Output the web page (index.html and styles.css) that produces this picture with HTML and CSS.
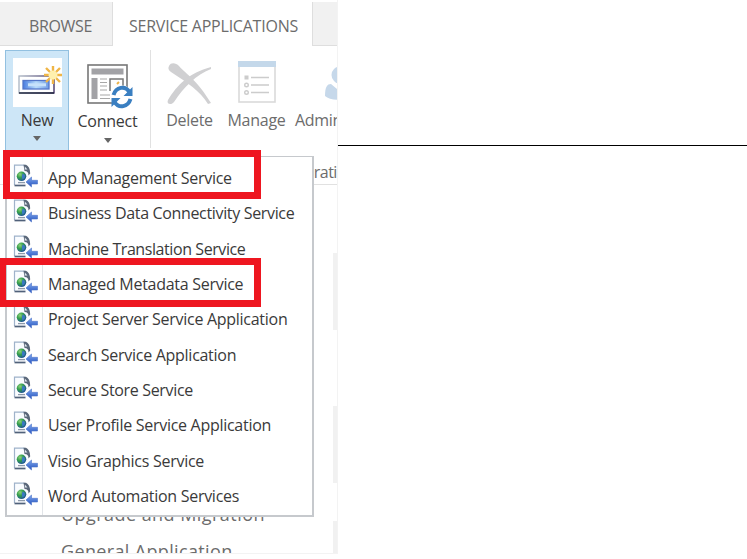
FILE: index.html
```html
<!DOCTYPE html>
<html lang="en">
<head>
<meta charset="utf-8">
<title>Service Applications</title>
<link rel="stylesheet" href="styles.css">
</head>
<body>
<svg width="0" height="0" class="defs">
  <defs>
    <radialGradient id="globe" cx=".35" cy=".3" r=".75"><stop offset="0" stop-color="#8fd07c"/><stop offset=".45" stop-color="#36a04a"/><stop offset="1" stop-color="#1d4f9c"/></radialGradient>
    <linearGradient id="blue" x2="0" y2="1"><stop offset="0" stop-color="#7faaf0"/><stop offset="1" stop-color="#2551bd"/></linearGradient>
    <linearGradient id="bar"><stop offset="0" stop-color="#477be0"/><stop offset=".5" stop-color="#b9dcfb"/><stop offset="1" stop-color="#6f9be6"/></linearGradient>
    <linearGradient id="frame"><stop offset="0" stop-color="#a9b4c2"/><stop offset="1" stop-color="#35255c"/></linearGradient>
    <symbol id="service" viewBox="0 0 26 24">
      <path d="M1.500 1.200H11.500L16.500 6V21H1.500Z" fill="#fafcff"/>
      <path d="M11.500 1.200H1.500V21" fill="none" stroke="#9fb2ca" stroke-width="1.200"/>
      <path d="M10.500 .800H13C15.500 2 17.200 5 17.200 9.500L15.500 11.500C15.500 8.500 14.500 7 11.500 7Z" fill="#5a6779"/>
      <path d="M11.800 2.500L14.500 5.500H11.800Z" fill="#dfe6ee"/>
      <path d="M1.500 21.500H12.500" stroke="#50617a" stroke-width="1.700"/>
      <path d="M5 18.600H12" stroke="#8e9aaa" stroke-width="1.300"/>
      <circle cx="8.500" cy="12.300" r="4.800" fill="url(#globe)"/>
      <path d="M9.500 9.500C12 10 12.500 12 11.500 14L9.500 15.500 8.800 13Z" fill="#3a78c5"/>
      <path d="M13 18L18.500 13V16.300H24.500V20H18.500V23Z" fill="url(#blue)" stroke="#4b72c8" stroke-width=".6"/>
    </symbol>
  </defs>
</svg>
<main class="page">
  <section class="site">
    <nav class="tabs">
      <div class="tab browse"><span>BROWSE</span></div>
      <div class="tab active"><span>SERVICE APPLICATIONS</span></div>
      <div class="tab rest"></div>
    </nav>
    <div class="ribbon">
      <div class="button new">
        <svg class="picture" width="49" height="49" viewBox="0 0 49 49">
          <rect width="49" height="49" fill="#fff"/>
          <rect x="6" y="18" width="35" height="17" fill="#fff" stroke="url(#frame)" stroke-width="1.300"/>
          <path d="M6 35H41" stroke="#252b42" stroke-width="1.700"/>
          <rect x="10" y="22.500" width="26" height="8.500" fill="url(#bar)" stroke="#5577c9" stroke-width="1.300"/>
          <path d="M15 26.800H33" stroke="#c7e2fb" stroke-width="3"/>
          <g stroke="#efb546" stroke-width="2.400"><path d="M40 8V26M31 17H49M33 10L47 24M47 10L33 24"/></g>
          <circle cx="40" cy="17" r="4.500" fill="#fff0ae"/>
        </svg>
        <span class="label l-new">New</span><i class="arrow"></i>
      </div>
      <div class="button connect">
        <svg class="picture" width="48" height="48" viewBox="0 0 48 48">
          <rect x="2" y="2" width="39" height="38" fill="#fff" stroke="#777" stroke-width="1.600"/>
          <rect x="5.500" y="5.500" width="32" height="6" fill="#a2a2a6"/>
          <rect x="5.500" y="15" width="6" height="21" fill="#a2a2a6"/>
          <path d="M14 16H21M14 19.500H21M14 23H21M14 27H21M14 32H24M14 35.500H24" stroke="#a8a8a8" stroke-width="1.200"/>
          <path d="M24 28V16H37V24" fill="#fff" stroke="#777" stroke-width="1.500"/>
          <path d="M31 21L33 19" stroke="#edb44a" stroke-width="2"/>
          <circle cx="36" cy="34" r="11.500" fill="#fff"/>
          <g fill="none" stroke="#3a7fc1" stroke-width="4"><path d="M27.500 32C30 24 39 22 43.500 29"/><path d="M44.500 36C42 44 33 46 28.500 39"/></g>
          <path d="M46.500 24V33H37.500ZM25.500 44V35H34.500Z" fill="#3a7fc1"/>
        </svg>
        <span class="label l-connect">Connect</span><i class="arrow"></i>
      </div>
      <div class="button delete">
        <svg class="picture" width="46" height="46" viewBox="0 0 46 46">
          <path d="M2 4C4 0 9 1 12 4C20 13 30 18 44 41L41 42C32 28 22 22 4 10C1 8 1 6 2 4Z" fill="#d0d0d2"/>
          <path d="M1 38C10 23 22 11 44 5L44 7C29 13 17 25 7 40C5 43-1 43 1 38Z" fill="#d0d0d2"/>
        </svg>
        <span class="label l-delete">Delete</span>
      </div>
      <div class="button manage">
        <svg class="picture" width="38" height="42" viewBox="0 0 38 42">
          <rect x="1" y="1" width="36" height="40" fill="#fff" stroke="#dadada" stroke-width="1.600"/>
          <rect width="38" height="6" fill="#c4d8ea"/>
          <path d="M13 16.500H31M13 24H31M13 31.500H31" stroke="#ccc" stroke-width="1.500"/>
          <rect x="6.500" y="14.500" width="4" height="4" fill="#ccc"/>
          <g fill="none" stroke="#ccc" stroke-width="1.400"><circle cx="8.500" cy="24" r="1.800"/><circle cx="8.500" cy="31.500" r="1.800"/></g>
        </svg>
        <span class="label l-manage">Manage</span>
      </div>
      <div class="button admin">
        <svg class="picture" width="42" height="36" viewBox="0 0 42 36">
          <path d="M0 29C0 20 2 17 6 17L12 22 18 17C24 17 25 23 25 29C20 34 5 34 0 29Z" fill="#c6d8ea"/>
          <circle cx="15" cy="8" r="8.500" fill="#c6d8ea"/>
        </svg>
        <span class="label l-admin">Administrators</span>
      </div>
    </div>
    <div class="group"><span>Operations</span></div>
    <div class="content">
      <div class="rail"><i></i><i></i><i></i></div>
      <p class="link upgrade"><span>Upgrade and Migration</span></p>
      <p class="link general"><span>General Application</span></p>
    </div>
    <ul class="menu">
      <li><svg><use href="#service"/></svg><span>App Management Service</span></li>
      <li><svg><use href="#service"/></svg><span class="snug">Business Data Connectivity Service</span></li>
      <li><svg><use href="#service"/></svg><span class="tight">Machine Translation Service</span></li>
      <li><svg><use href="#service"/></svg><span>Managed Metadata Service</span></li>
      <li><svg><use href="#service"/></svg><span>Project Server Service Application</span></li>
      <li><svg><use href="#service"/></svg><span>Search Service Application</span></li>
      <li><svg><use href="#service"/></svg><span class="snug">Secure Store Service</span></li>
      <li><svg><use href="#service"/></svg><span>User Profile Service Application</span></li>
      <li><svg><use href="#service"/></svg><span>Visio Graphics Service</span></li>
      <li><svg><use href="#service"/></svg><span>Word Automation Services</span></li>
    </ul>
    <div class="highlight first"></div>
    <div class="highlight second"></div>
  </section>
  <hr class="rule">
</main>
</body>
</html>
```
FILE: styles.css
```css
* { box-sizing: border-box; }
body { margin: 0; background: #fff; font: 16px/22px "Open Sans", "Noto Sans", sans-serif; color: #3a3a3a; overflow: hidden; }
.defs { position: absolute; }
.page { display: flex; width: 747px; height: 559px; }
.site { position: relative; flex: none; width: 338px; height: 554px; padding-top: 2px; overflow: hidden; border-right: 1px solid #f3f3f3; border-bottom: 1px solid #f3f3f3; }
.rule { flex: 1; height: 1px; margin: 145px 0 0; border: 0; background: #000; }
span { white-space: nowrap; }

.tabs { display: flex; height: 44px; color: #6c6c6c; }
.tab { flex: none; background: #f1f1f1; border-bottom: 1px solid #dedede; padding-top: 13px; }
.browse { width: 113px; border-right: 1px solid #dedede; padding-left: 29px; letter-spacing: -.35px; }
.active { width: 199px; background: #fff; border-bottom: 0; padding-left: 16px; letter-spacing: -.23px; }
.rest { width: 26px; border-left: 1px solid #dedede; }

.ribbon { display: flex; height: 109px; padding: 4px 0 0 5px; }
.button { flex: none; display: flex; flex-direction: column; align-items: center; }
.picture { flex: none; display: block; }
.label { letter-spacing: -.3px; }
.arrow { border: 4px solid transparent; border-top: 5px solid #666; border-bottom: 0; }
.new { width: 64px; background: #cde6f7; border: 1px solid #92c0e0; padding-top: 7px; }
.new .label { margin-top: 2px; }
.new .arrow { margin-top: 5px; }
.connect { width: 82px; height: 98px; padding: 13px 4px 0 0; border-right: 1px solid #e1e1e1; }
.connect .picture { margin-left: 5px; }
.connect .label { margin-top: -1px; letter-spacing: -.25px; }
.connect .arrow { margin-top: 6px; }
.delete { width: 77px; padding-top: 12px; color: #6c6c6c; }
.delete .label { margin-top: 1px; }
.manage { width: 59px; padding-top: 11px; margin-left: -1px; color: #6c6c6c; }
.manage .label { margin-top: 6px; letter-spacing: -.25px; }
.admin { width: 60px; align-items: flex-start; padding: 17px 0 0 9px; color: #6c6c6c; }
.admin .picture { margin-left: 30px; }
.admin .label { margin-top: 6px; }

.group { height: 30px; border-bottom: 1px solid #e1e1e1; color: #6c6c6c; display: flex; padding: 6px 0 0 284px; letter-spacing: -.5px; }
.content { height: 368px; color: #6c6c6c; font-size: 18px; }
.rail { height: 317px; display: flex; flex-direction: column; align-items: flex-end; padding-top: 68px; gap: 76px; }
.rail i { width: 4px; height: 77px; flex: none; background: #f1f1f1; }
.rail i:last-child { margin-top: -38px; }
.link { margin: 0 0 0 61px; height: 37px; line-height: 24px; letter-spacing: .45px; }
.general { letter-spacing: .35px; }

.menu { position: absolute; left: 5px; top: 156px; width: 309px; height: 361px; margin: 0; padding: 3px 0; list-style: none; border: 2px solid #c6c9cd; border-top-width: 1px; background: linear-gradient(to right, transparent 35px, #e1e4e8 35px, #e1e4e8 36px, transparent 36px) #fff; }
.menu li { display: flex; height: 35.35px; padding: 4px 0 0 6px; }
.menu svg { flex: none; width: 26px; height: 24px; margin-right: 9px; }
.menu span { padding-top: 3px; letter-spacing: -.28px; }
.menu .snug { letter-spacing: -.34px; }
.menu .tight { letter-spacing: -.42px; }
.highlight { position: absolute; border: 7px solid #ee1620; height: 49px; }
.first { left: 3px; top: 150px; width: 258px; }
.second { left: -1px; top: 258px; width: 262px; }
```
